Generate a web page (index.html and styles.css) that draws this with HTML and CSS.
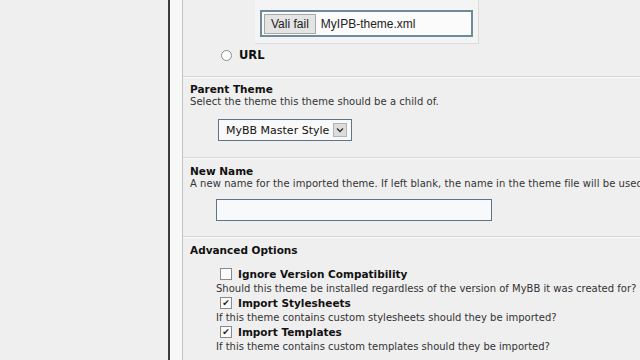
FILE: index.html
```html
<!DOCTYPE html>
<html lang="en">
<head>
    <meta charset="UTF-8">
    <title>Import Theme</title>
    <link rel="stylesheet" href="styles.css">
</head>
<body>
    <!-- left empty area -->
    <div class="desk"></div>

    <div class="frame">
        <div class="gutter"></div>
        <main class="form">
            <!-- import source -->
            <div class="row row-source">
                <div class="upload-panel">
                    <div class="file-box">
                        <span class="file-btn">Vali fail</span>
                        <span class="file-name">MyIPB-theme.xml</span>
                    </div>
                </div>
                <label class="radio-line">
                    <span class="radio"></span>
                    <span class="radio-text">URL</span>
                </label>
            </div>

            <!-- parent theme -->
            <div class="row row-parent">
                <div class="row-title">Parent Theme</div>
                <div class="row-desc">Select the theme this theme should be a child of.</div>
                <div class="select">
                    <span class="select-text">MyBB Master Style</span>
                    <span class="select-arrow">
                        <svg width="8" height="6" viewBox="0 0 8 6"><path d="M1 1.5 L4 4.5 L7 1.5" fill="none" stroke="#333" stroke-width="1.4"/></svg>
                    </span>
                </div>
            </div>

            <!-- new name -->
            <div class="row">
                <div class="row-title">New Name</div>
                <div class="row-desc">A new name for the imported theme. If left blank, the name in the theme file will be used.</div>
                <div class="text-input"></div>
            </div>

            <!-- advanced options -->
            <div class="row row-advanced">
                <div class="row-title">Advanced Options</div>
                <div class="options">
                    <div class="option">
                        <div class="option-line">
                            <span class="check"></span>
                            <span class="option-label">Ignore Version Compatibility</span>
                        </div>
                        <div class="option-desc">Should this theme be installed regardless of the version of MyBB it was created for?</div>
                    </div>
                    <div class="option">
                        <div class="option-line">
                            <span class="check checked">&#10004;</span>
                            <span class="option-label">Import Stylesheets</span>
                        </div>
                        <div class="option-desc">If this theme contains custom stylesheets should they be imported?</div>
                    </div>
                    <div class="option">
                        <div class="option-line">
                            <span class="check checked">&#10004;</span>
                            <span class="option-label">Import Templates</span>
                        </div>
                        <div class="option-desc">If this theme contains custom templates should they be imported?</div>
                    </div>
                </div>
            </div>
        </main>
    </div>
</body>
</html>
```

FILE: styles.css
```css
/* base */
* {
    margin: 0;
    padding: 0;
    box-sizing: border-box;
}

body {
    width: 640px;
    height: 360px;
    overflow: hidden;
    display: flex;
    background: #efefef;
    font-family: "DejaVu Sans", Verdana, sans-serif;
    color: #111;
}

.desk {
    width: 168px;
    flex-shrink: 0;
    background: #efefef;
}

/* window frame */
.frame {
    flex: 1;
    display: flex;
    border-left: 2px solid #3c3c3c;
    min-width: 0;
}

.gutter {
    width: 13px;
    flex-shrink: 0;
    background: #f7f8f8;
    border-right: 1px solid #c4c4c4;
}

.form {
    flex: 1;
    min-width: 0;
    background: #efefef;
    overflow: hidden;
}

/* rows */
.row {
    padding: 7px 0 15px 7px;
    border-bottom: 1px solid #d6d6d6;
    box-shadow: 0 1px 0 #fafafa;
}

.row-parent {
    padding: 6px 0 16px 7px;
}

.row-title {
    font-size: 10.5px;
    font-weight: bold;
    line-height: 13px;
}

.row-desc {
    font-size: 10px;
    line-height: 12px;
    letter-spacing: 0.05px;
    color: #333;
    white-space: nowrap;
}

/* source row */
.row-source {
    height: 77px;
    padding: 0;
}

.upload-panel {
    margin-left: 72px;
    width: 224px;
    height: 44px;
    padding: 10px 5px 0 5px;
    background: #f4f4f4;
    border-right: 1px solid #dcdcdc;
    border-bottom: 1px solid #dcdcdc;
}

.file-box {
    height: 27px;
    display: flex;
    align-items: center;
    padding-left: 2px;
    background: #fbfbfb;
    border: 2px solid #6f8a99;
    font-family: "Liberation Sans", Arial, sans-serif;
    font-size: 12px;
}

.file-btn {
    padding: 2px 6px;
    background: #e4e4e4;
    border: 1px solid #a8a8a8;
    color: #222;
}

.file-name {
    margin-left: 5px;
    color: #222;
}

.radio-line {
    display: flex;
    align-items: center;
    gap: 7px;
    margin: 4px 0 0 38px;
}

.radio {
    width: 11px;
    height: 11px;
    border-radius: 50%;
    border: 1px solid #8d8d8d;
    background: #fdfdfd;
}

.radio-text {
    font-size: 11.5px;
    font-weight: bold;
}

/* select */
.select {
    display: flex;
    align-items: center;
    width: 134px;
    height: 22px;
    margin: 11px 0 0 28px;
    padding: 0 4px 0 7px;
    border: 1px solid #5d7585;
    background: #f9f9f9;
}

.select-text {
    flex: 1;
    font-size: 11px;
    white-space: nowrap;
}

.select-arrow {
    width: 14px;
    height: 14px;
    display: flex;
    align-items: center;
    justify-content: center;
    background: #dcdcdc;
    border: 1px solid #b4b4b4;
}

/* text input */
.text-input {
    width: 276px;
    height: 22px;
    margin: 9px 0 0 26px;
    border: 1px solid #5d7585;
    background: #f7f9fa;
}

/* advanced options */
.row-advanced {
    border-bottom: none;
    box-shadow: none;
}

.options {
    margin: 9px 0 0 26px;
}

.option-line {
    display: flex;
    align-items: center;
    gap: 6px;
    margin-left: 4px;
    height: 16px;
}

.check {
    width: 12px;
    height: 12px;
    border: 1px solid #8a8a8a;
    background: #fbfbfb;
    font-size: 9px;
    line-height: 10px;
    text-align: center;
    color: #222;
}

.option-label {
    font-size: 10.5px;
    font-weight: bold;
}

.option-desc {
    font-size: 10px;
    line-height: 13px;
    color: #333;
    white-space: nowrap;
}
```
